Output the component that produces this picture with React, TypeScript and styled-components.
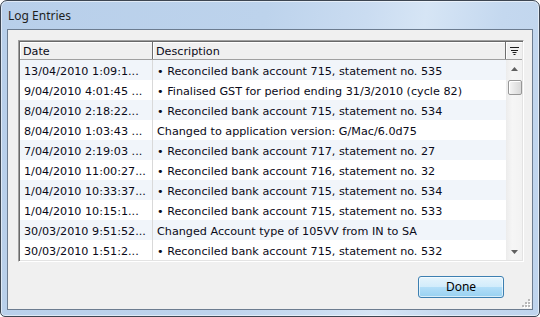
import React from "react";
import styled, { createGlobalStyle } from "styled-components";

const GlobalStyle = createGlobalStyle`
  html, body {
    margin: 0;
    padding: 0;
    width: 540px;
    height: 317px;
    overflow: hidden;
    background: #ffffff;
  }
  * { box-sizing: border-box; }
`;

const Window = styled.div`
  width: 540px;
  height: 317px;
  border: 1px solid #3d4652;
  border-radius: 7px 7px 5px 5px;
  background: linear-gradient(100deg, #b8cfea 0%, #bdd3ec 45%, #cadcf1 62%, #d6e5f5 72%, #c4d8ef 85%, #bfd4ed 100%);
  box-shadow: inset 0 0 0 1px rgba(255, 255, 255, 0.55);
  display: flex;
  flex-direction: column;
  padding: 0 6px 6px 6px;
`;

const TitleBar = styled.div`
  height: 28px;
  display: flex;
  align-items: center;
  padding-left: 1px;
  padding-top: 1px;
  font-family: "Noto Sans", sans-serif;
  font-size: 12px;
  color: #1e1e1e;
`;

const Client = styled.div`
  position: relative;
  flex: 1;
  border: 1px solid #6c7c90;
  background: #f0f0f0;
  display: flex;
  flex-direction: column;
  padding: 10px 8px 10px 10px;
`;

const ListView = styled.div`
  width: 506px;
  height: 222px;
  border: 1px solid;
  border-color: #a0a0a0 #ffffff #ffffff #a0a0a0;
  box-shadow: inset 1px 1px 0 #696969, inset -1px -1px 0 #e3e3e3;
  padding: 1px;
  background: #ffffff;
  display: flex;
  flex-direction: column;
  font-family: "DejaVu Sans", sans-serif;
  font-size: 11.2px;
  color: #0a0a18;
`;

const HeaderRow = styled.div`
  height: 18px;
  display: flex;
  background: #f0f0f0;
  border-bottom: 1px solid #a0a0a0;
`;

const HeaderCell = styled.div<{ $w?: number }>`
  ${(p) => (p.$w ? `width: ${p.$w}px;` : "flex: 1;")}
  flex-shrink: 0;
  border-right: 1px solid #6e6e6e;
  box-shadow: inset 1px 1px 0 #ffffff;
  padding: 2px 0 0 3px;
  line-height: 15px;
  white-space: nowrap;
  overflow: hidden;
`;

const FilterCell = styled.div`
  width: 16px;
  flex-shrink: 0;
  display: flex;
  align-items: center;
  justify-content: center;
  box-shadow: inset 1px 1px 0 #ffffff;
`;

const Body = styled.div`
  flex: 1;
  display: flex;
  min-height: 0;
`;

const Rows = styled.div`
  flex: 1;
  display: flex;
  flex-direction: column;
  overflow: hidden;
`;

const Row = styled.div<{ $alt: boolean }>`
  height: 20px;
  flex-shrink: 0;
  display: flex;
  background: ${(p) => (p.$alt ? "#f1f5fa" : "#ffffff")};
`;

const DateCell = styled.div`
  width: 133px;
  flex-shrink: 0;
  border-right: 1px solid #d9d9d9;
  padding: 3px 0 0 4px;
  line-height: 17px;
  white-space: nowrap;
  overflow: hidden;
`;

const DescCell = styled.div`
  flex: 1;
  padding: 3px 0 0 4px;
  line-height: 17px;
  white-space: nowrap;
  overflow: hidden;
`;

const ScrollBar = styled.div`
  width: 16px;
  flex-shrink: 0;
  background: linear-gradient(to right, #ececec, #f6f6f6 40%, #f2f2f2);
  display: flex;
  flex-direction: column;
  align-items: center;
`;

const ArrowButton = styled.div`
  height: 17px;
  width: 100%;
  display: flex;
  align-items: center;
  justify-content: center;
`;

const Thumb = styled.div`
  margin-top: 3px;
  width: 14px;
  height: 15px;
  margin-left: 1px;
  border: 1px solid #979797;
  border-radius: 2px;
  background: linear-gradient(to right, #f5f5f5, #e6e6e6 50%, #d8d8d8);
  box-shadow: inset 1px 1px 0 #ffffff;
`;

const Track = styled.div`
  flex: 1;
`;

const Footer = styled.div`
  margin-top: 14px;
  display: flex;
  justify-content: flex-end;
  padding-right: 20px;
`;

const Button = styled.button`
  width: 86px;
  height: 22px;
  border: 1px solid #3c7fb1;
  border-radius: 3px;
  background: linear-gradient(to bottom, #e5f4fc 0%, #d2ecfb 48%, #b2def8 52%, #98d1f1 100%);
  box-shadow: inset 0 0 0 1px rgba(255, 255, 255, 0.6);
  font-family: "Noto Sans", sans-serif;
  font-size: 12px;
  color: #000000;
  padding: 0;
  line-height: 18px;
  cursor: default;
`;

const Grip = styled.svg`
  position: absolute;
  right: 1px;
  bottom: 1px;
`;

const entries: [string, string][] = [
  ["13/04/2010 1:09:1...", "\u2022 Reconciled bank account 715, statement no. 535"],
  ["9/04/2010 4:01:45 ...", "\u2022 Finalised GST for period ending 31/3/2010 (cycle 82)"],
  ["8/04/2010 2:18:22...", "\u2022 Reconciled bank account 715, statement no. 534"],
  ["8/04/2010 1:03:43 ...", "Changed to application version: G/Mac/6.0d75"],
  ["7/04/2010 2:19:03 ...", "\u2022 Reconciled bank account 717, statement no. 27"],
  ["1/04/2010 11:00:27...", "\u2022 Reconciled bank account 716, statement no. 32"],
  ["1/04/2010 10:33:37...", "\u2022 Reconciled bank account 715, statement no. 534"],
  ["1/04/2010 10:15:1...", "\u2022 Reconciled bank account 715, statement no. 533"],
  ["30/03/2010 9:51:52...", "Changed Account type of 105VV from IN to SA"],
  ["30/03/2010 1:51:2...", "\u2022 Reconciled bank account 715, statement no. 532"],
];

const FilterIcon = () => (
  <svg width="9" height="8" viewBox="0 0 9 8">
    <rect x="0" y="0" width="9" height="1" fill="#1a1a1a" />
    <rect x="1" y="3" width="7" height="1" fill="#1a1a1a" />
    <rect x="2.5" y="5" width="4" height="1" fill="#1a1a1a" />
    <rect x="3.5" y="7" width="2" height="1" fill="#1a1a1a" />
  </svg>
);

const UpArrow = () => (
  <svg width="7" height="4" viewBox="0 0 7 4">
    <path d="M3.5 0 L7 4 L0 4 Z" fill="#606060" />
  </svg>
);

const DownArrow = () => (
  <svg width="7" height="4" viewBox="0 0 7 4">
    <path d="M0 0 L7 0 L3.5 4 Z" fill="#606060" />
  </svg>
);

export default function App() {
  return (
    <>
      <GlobalStyle />
      <Window>
        <TitleBar>Log Entries</TitleBar>
        <Client>
          <ListView>
            <HeaderRow>
              <HeaderCell $w={133}>Date</HeaderCell>
              <HeaderCell>Description</HeaderCell>
              <FilterCell>
                <FilterIcon />
              </FilterCell>
            </HeaderRow>
            <Body>
              <Rows>
                {entries.map(([d, desc], i) => (
                  <Row key={i} $alt={i % 2 === 0}>
                    <DateCell>{d}</DateCell>
                    <DescCell>{desc}</DescCell>
                  </Row>
                ))}
              </Rows>
              <ScrollBar>
                <ArrowButton>
                  <UpArrow />
                </ArrowButton>
                <Thumb />
                <Track />
                <ArrowButton>
                  <DownArrow />
                </ArrowButton>
              </ScrollBar>
            </Body>
          </ListView>
          <Footer>
            <Button>Done</Button>
          </Footer>
          <Grip width="10" height="10" viewBox="0 0 10 10">
            {[
              [7, 1],
              [4, 4],
              [7, 4],
              [1, 7],
              [4, 7],
              [7, 7],
            ].map(([x, y], i) => (
              <g key={i}>
                <rect x={x + 1} y={y + 1} width="2" height="2" fill="#ffffff" />
                <rect x={x} y={y} width="2" height="2" fill="#b8b8b8" />
              </g>
            ))}
          </Grip>
        </Client>
      </Window>
    </>
  );
}
